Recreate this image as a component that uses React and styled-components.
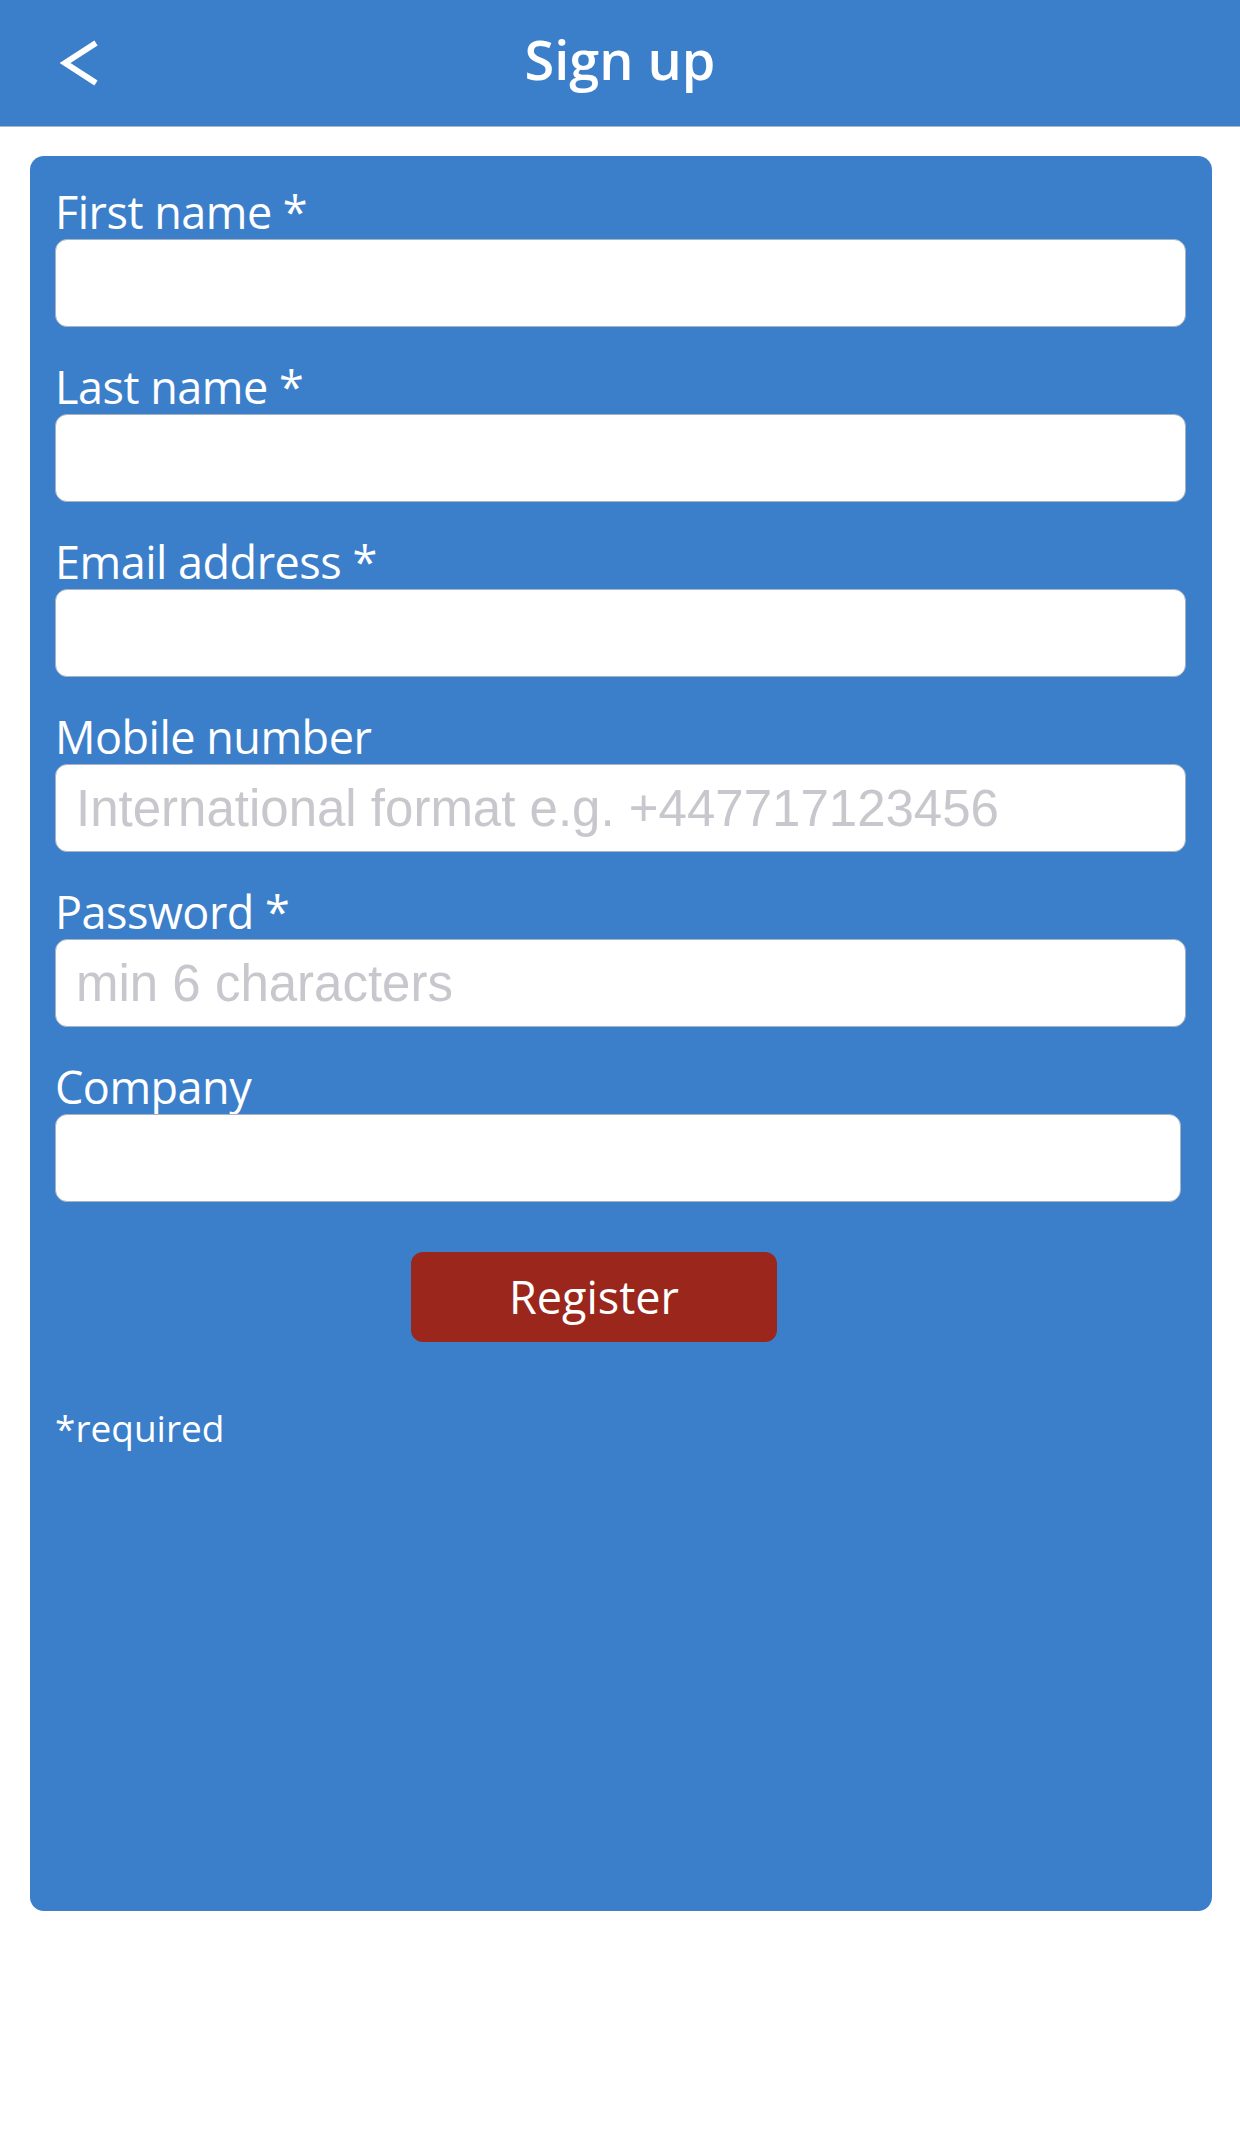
import React from "react";
import styled, { createGlobalStyle } from "styled-components";

const Global = createGlobalStyle`
  html, body { margin: 0; padding: 0; background: #ffffff; }
  * { box-sizing: border-box; }
`;

const Page = styled.div`
  width: 1240px;
  min-height: 2143px;
  background: #ffffff;
  font-family: "Open Sans", "Noto Sans", sans-serif;
`;

const Header = styled.header`
  height: 127px;
  background: #3b7eca;
  border-bottom: 1px solid #a9b6c6;
  display: grid;
  grid-template-columns: 1fr auto 1fr;
  align-items: center;
  padding-bottom: 8px;
`;

const BackButton = styled.button`
  justify-self: start;
  margin-left: 60px;
  margin-top: 8px;
  padding: 0;
  border: 0;
  background: transparent;
  display: flex;
  cursor: pointer;
`;

const Title = styled.h1`
  margin: 0;
  color: #ffffff;
  font-family: "Open Sans", sans-serif;
  font-weight: 600;
  font-size: 54px;
  line-height: 54px;
`;

const Card = styled.main`
  margin: 29px 28px 0 30px;
  height: 1755px;
  background: #3b7eca;
  border-radius: 14px;
  padding: 28px 26px 0 25px;
  display: flex;
  flex-direction: column;
`;

const Field = styled.div`
  display: flex;
  flex-direction: column;
  margin-bottom: 32px;
  padding-right: ${(p) => (p.$narrow ? "5px" : "0")};
`;

const Label = styled.label`
  color: #ffffff;
  font-size: 45px;
  letter-spacing: -0.5px;
  line-height: 55px;
  height: 55px;
`;

const Input = styled.input`
  height: 88px;
  width: 100%;
  border: 1px solid #a7b3c2;
  border-radius: 12px;
  background: #ffffff;
  padding: 0 20px;
  font-family: "Liberation Sans", Arial, sans-serif;
  font-size: 51px;
  color: #333;
  outline: none;
  &::placeholder {
    color: #c7c7cd;
  }
`;

const RegisterButton = styled.button`
  align-self: flex-start;
  margin: 18px 0 0 356px;
  width: 366px;
  height: 90px;
  border: 0;
  border-radius: 12px;
  background: #9b261b;
  color: #ffffff;
  font-family: "Open Sans", sans-serif;
  font-size: 45px;
  line-height: 90px;
  padding: 0;
  cursor: pointer;
`;

const Note = styled.p`
  margin: 60px 0 0 0;
  color: #ffffff;
  font-size: 37px;
  line-height: 52px;
`;

const fields = [
  { label: "First name *", type: "text" },
  { label: "Last name *", type: "text" },
  { label: "Email address *", type: "email" },
  { label: "Mobile number", type: "tel", placeholder: "International format e.g. +447717123456" },
  { label: "Password *", type: "password", placeholder: "min 6 characters" },
  { label: "Company", type: "text", narrow: true },
];

export default function App() {
  return (
    <Page>
      <Global />
      <Header>
        <BackButton aria-label="Back">
          <svg width="40" height="46" viewBox="0 0 40 46">
            <polyline
              points="36,3 5,23 36,43"
              fill="none"
              stroke="#ffffff"
              strokeWidth="6"
              strokeLinecap="butt"
              strokeLinejoin="miter"
            />
          </svg>
        </BackButton>
        <Title>Sign up</Title>
        <div />
      </Header>
      <Card>
        {fields.map((f) => (
          <Field key={f.label} $narrow={f.narrow}>
            <Label>{f.label}</Label>
            <Input type={f.type} placeholder={f.placeholder} />
          </Field>
        ))}
        <RegisterButton>Register</RegisterButton>
        <Note>*required</Note>
      </Card>
    </Page>
  );
}
